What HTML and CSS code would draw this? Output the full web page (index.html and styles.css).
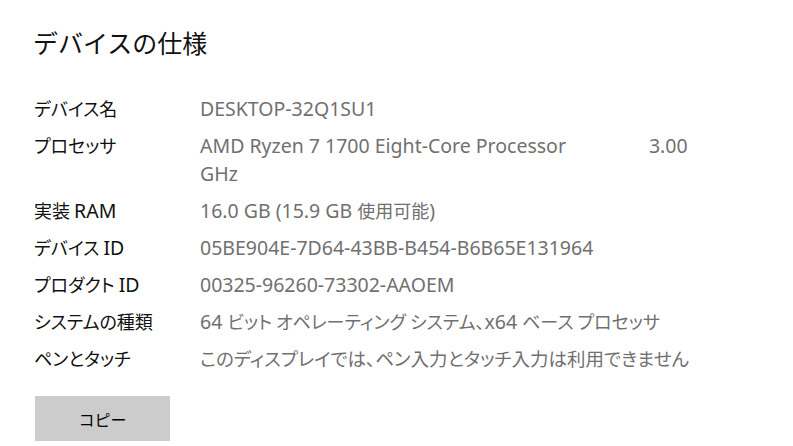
FILE: index.html
```html
<!DOCTYPE html>
<html lang="ja">
<head>
<meta charset="utf-8">
<title>デバイスの仕様</title>
<link rel="stylesheet" href="styles.css">
</head>
<body>
<main class="page">
  <h1 class="title">デバイスの仕様</h1>
  <dl class="specs">
    <div class="row"><dt>デバイス名</dt><dd><span class="en">DESKTOP-32Q1SU1</span></dd></div>
    <div class="row"><dt>プロセッサ</dt><dd><span class="en">AMD Ryzen 7 1700 Eight-Core Processor</span><span class="spacer"></span><span class="en">3.00</span> <span class="en">GHz</span></dd></div>
    <div class="row"><dt>実装 <span class="en">RAM</span></dt><dd><span class="en">16.0 GB (15.9 GB </span>使用可能<span class="en">)</span></dd></div>
    <div class="row"><dt>デバイス <span class="en">ID</span></dt><dd><span class="en">05BE904E-7D64-43BB-B454-B6B65E131964</span></dd></div>
    <div class="row"><dt>プロダクト <span class="en">ID</span></dt><dd><span class="en">00325-96260-73302-AAOEM</span></dd></div>
    <div class="row"><dt>システムの種類</dt><dd><span class="en">64 </span>ビット オペレーティング システム、<span class="en">x64 </span>ベース プロセッサ</dd></div>
    <div class="row"><dt>ペンとタッチ</dt><dd class="wide">このディスプレイでは、ペン入力とタッチ入力は利用できません</dd></div>
  </dl>
  <button class="copy" type="button">コピー</button>
</main>
</body>
</html>
```

FILE: styles.css
```css
html, body {
  margin: 0;
  padding: 0;
  background: #ffffff;
}

.page {
  padding: 24px 0 0 34px;
  font-family: "Noto Sans CJK JP", sans-serif;
  color: #000000;
}

.title {
  margin: 0 0 34px -1px;
  font-weight: 400;
  font-size: 25px;
  line-height: 36px;
  color: #111111;
}

.specs {
  margin: 0;
  display: flex;
  flex-direction: column;
  gap: 9px;
}

.row {
  display: flex;
  font-size: 18px;
  line-height: 28px;
  font-feature-settings: "palt" 1;
}

.row dt {
  width: 166px;
  flex: none;
  color: #111111;
}

.row dd {
  margin: 0;
  width: 500px;
  color: #707070;
}

.row dd.wide {
  width: 560px;
  font-size: 18.5px;
}

.en {
  font-family: "Noto Sans", sans-serif;
  font-size: 19.5px;
  line-height: 20px;
  font-feature-settings: normal;
}

.spacer {
  display: inline-block;
  width: 83px;
}

.copy {
  margin-top: 24px;
  margin-left: 1px;
  width: 135px;
  height: 45px;
  border: none;
  background: #cccccc;
  font-family: "Noto Sans CJK JP", sans-serif;
  font-size: 16px;
  color: #000000;
  padding: 0;
}
```
